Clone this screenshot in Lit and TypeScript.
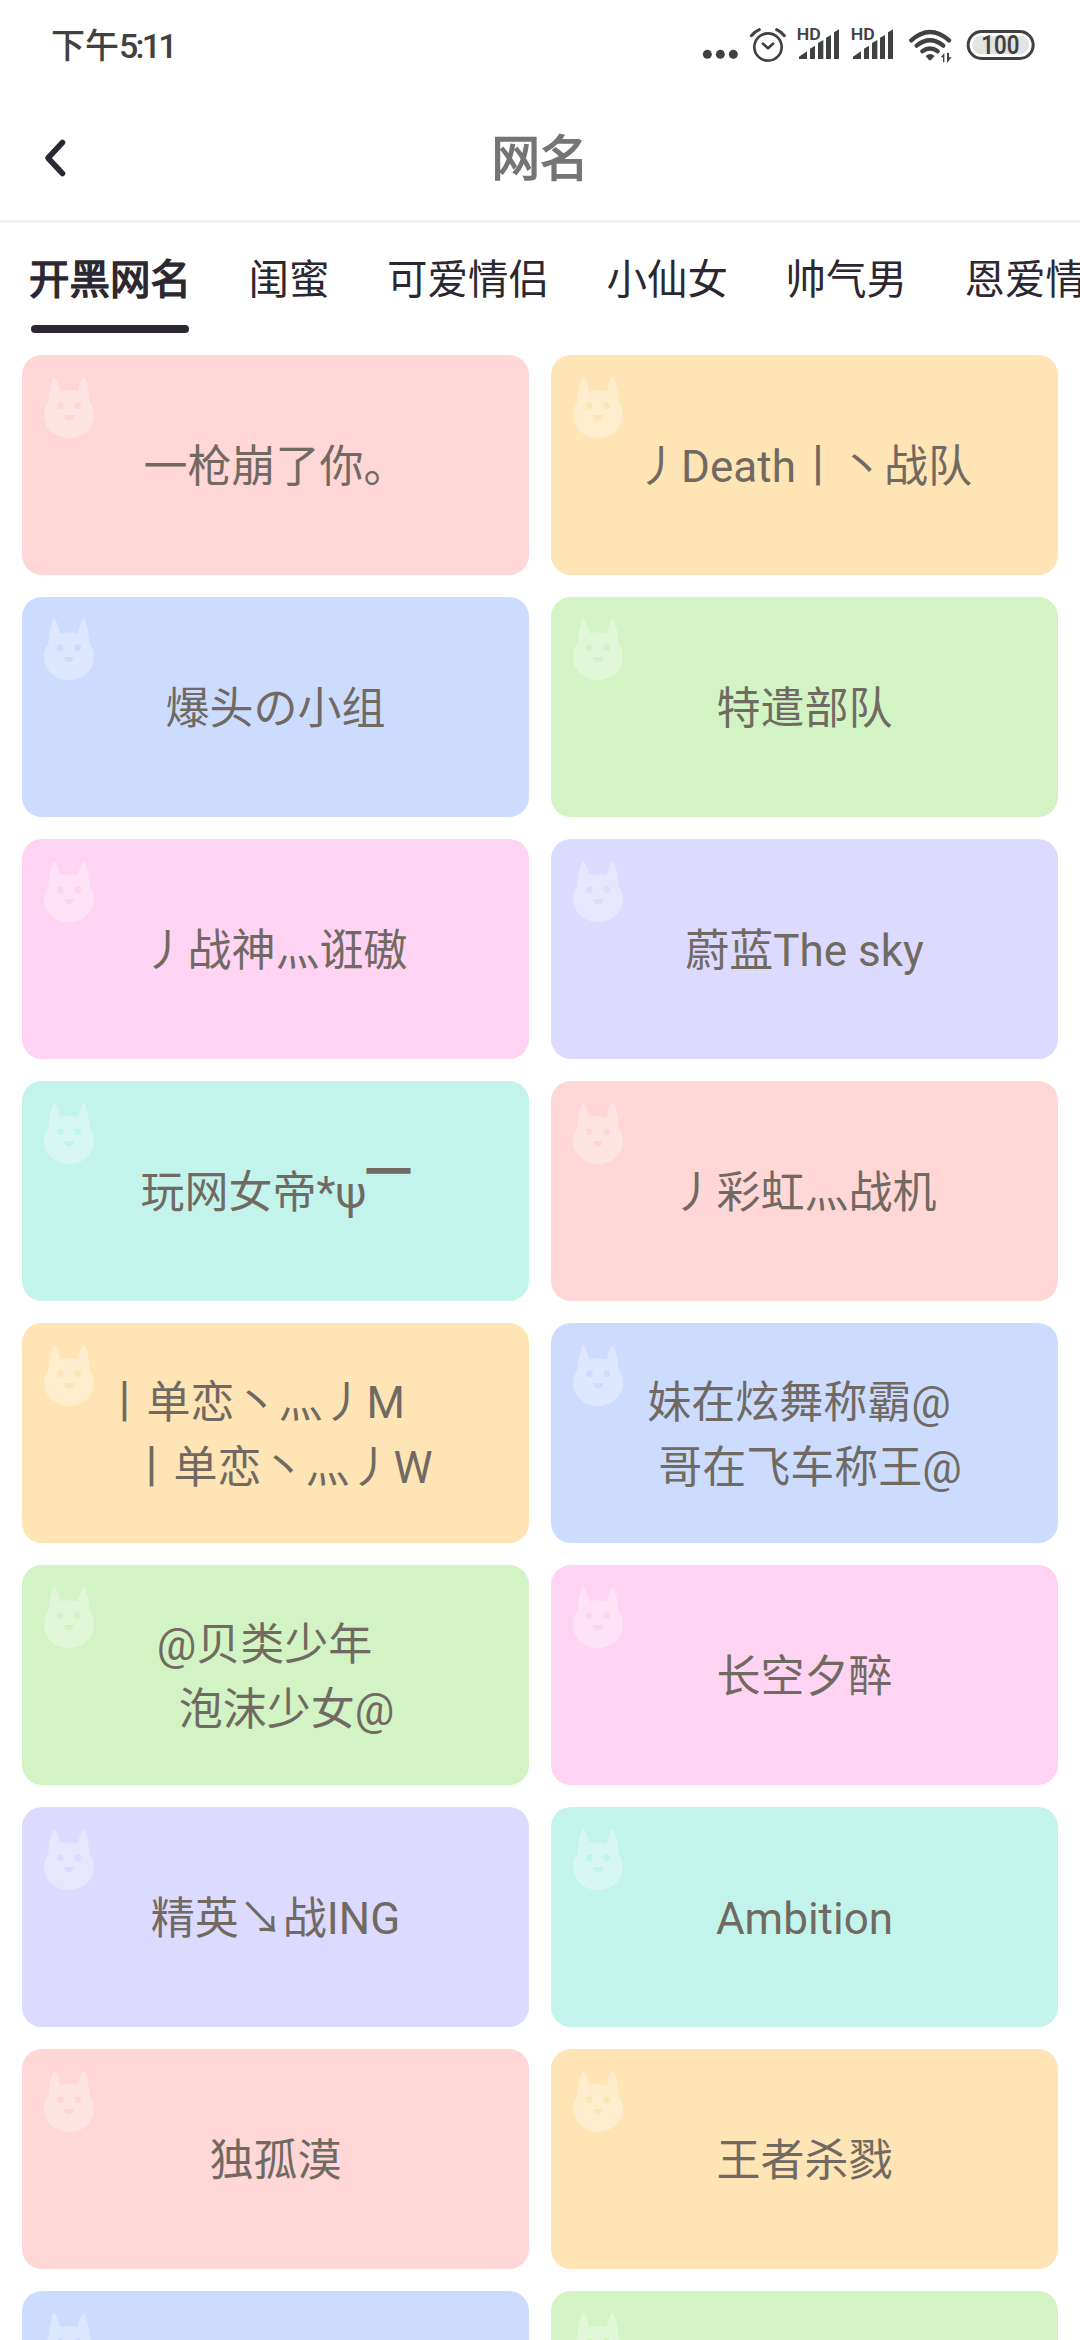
import { LitElement, html, css } from "lit";
import { customElement, property, state } from "lit/decorators.js";
import { classMap } from "lit/directives/class-map.js";

type Tone = "rose" | "amber" | "blue" | "green" | "pink" | "violet" | "mint";

interface NameEntry {
  lines: string[];
  tone: Tone;
}

const TABS = ["开黑网名", "闺蜜", "可爱情侣", "小仙女", "帅气男", "恩爱情侣"];

const NAMES: NameEntry[] = [
  { lines: ["一枪崩了你。"], tone: "rose" },
  { lines: ["丿Death丨丶战队"], tone: "amber" },
  { lines: ["爆头の小组"], tone: "blue" },
  { lines: ["特遣部队"], tone: "green" },
  { lines: ["丿战神灬诳磝"], tone: "pink" },
  { lines: ["蔚蓝The sky"], tone: "violet" },
  { lines: ["玩网女帝*ψ￣"], tone: "mint" },
  { lines: ["丿彩虹灬战机"], tone: "rose" },
  { lines: ["丨单恋丶灬丿M    ", " 丨单恋丶灬丿W"], tone: "amber" },
  { lines: ["妹在炫舞称霸@ ", " 哥在飞车称王@"], tone: "blue" },
  { lines: ["@贝类少年  ", "  泡沫少女@"], tone: "green" },
  { lines: ["长空夕醉"], tone: "pink" },
  { lines: ["精英↘战ING"], tone: "violet" },
  { lines: ["Ambition"], tone: "mint" },
  { lines: ["独孤漠"], tone: "rose" },
  { lines: ["王者杀戮"], tone: "amber" },
  { lines: [], tone: "blue" },
  { lines: [], tone: "green" },
];

@customElement("status-bar")
export class StatusBar extends LitElement {
  static styles = css`
    :host {
      display: flex;
      justify-content: space-between;
      align-items: flex-start;
      height: 96px;
      box-sizing: border-box;
      padding: 25px 43.700px 0 51px;
      color: #414141;
      font-family: Roboto, "Noto Sans CJK SC", sans-serif;
    }
    .time {
      display: flex;
      padding-top: 1px;
      font-size: 34px;
      line-height: 40px;
      font-weight: 500;
    }
    .digits {
      letter-spacing: -2.8px;
    }
    .icons {
      display: flex;
    }
    svg {
      display: block;
      height: 40px;
      fill: #414141;
    }
    .dots { width: 43px; margin-right: 2px; }
    .alarm { width: 43px; margin-right: 3px; }
    .signal { width: 54px; }
    .wifi { width: 52px; margin: 0 6.300px 0 4px; }
    .battery { width: 73px; }
    .line {
      fill: none;
      stroke: #414141;
      stroke-linecap: round;
      stroke-linejoin: round;
    }
    .level { fill: #e3e3e3; }
    .hd {
      font-size: 49px;
      font-weight: 600;
    }
    .percent {
      font-size: 75px;
      font-weight: 600;
    }
  `;

  private signal() {
    return html`<svg class="signal" viewBox="339 45 162 120">
      <text class="hd" x="350" y="91" textLength="72" lengthAdjust="spacingAndGlyphs">HD</text>
      <path d="M357 147v-7l24-16v23zM390 147v-31l15-9v40zM414 147v-48l16-9v57zM438 147v-64l15-8v72zM462 147v-80l15-9v89z" />
    </svg>`;
  }

  render() {
    return html`
      <div class="time"><span>下午</span><span class="digits">5:11</span></div>
      <div class="icons">
        <svg class="dots" viewBox="66 45 129 120">
          <circle cx="82" cy="133" r="13.5" />
          <circle cx="121" cy="133" r="13.5" />
          <circle cx="160" cy="133" r="13.5" />
        </svg>
        <svg class="alarm" viewBox="201 45 129 120">
          <circle class="line" cx="264" cy="111" r="41" stroke-width="8" />
          <path class="line" d="M249 101l15 14 15-14" stroke-width="8" />
          <path class="line" d="M214 77Q224 65 238 59M313 77Q303 65 290 59" stroke-width="9" stroke-linecap="butt" />
        </svg>
        ${this.signal()} ${this.signal()}
        <svg class="wifi" viewBox="675 45 156 120">
          <path class="line" d="M694 91Q750 41 807 91" stroke-width="13" />
          <path class="line" d="M710 107Q750 75 790 107" stroke-width="13" />
          <path class="line" d="M727 124Q750 107 773 124" stroke-width="13" />
          <path d="M737 138Q750 126 764 138L754 149Q750 152 746 149z" />
          <path d="M789 157v-15h-7l11-13v28zM801 129v29l14-16h-8v-13z" />
        </svg>
        <svg class="battery" viewBox="850 45 219 120">
          <rect class="line" x="865.500" y="64.500" width="195" height="81" rx="40.500" stroke-width="9" />
          <rect class="level" x="878" y="77" width="170" height="56" rx="28" />
          <text class="percent" x="905" y="132" textLength="114" lengthAdjust="spacingAndGlyphs">100</text>
        </svg>
      </div>
    `;
  }
}

@customElement("name-card")
export class NameCard extends LitElement {
  @property({ attribute: false }) lines: string[] = [];
  @property() tone: Tone = "rose";

  static styles = css`
    :host {
      display: block;
    }
    .card {
      position: relative;
      display: flex;
      flex-direction: column;
      align-items: center;
      justify-content: center;
      height: 220px;
      box-sizing: border-box;
      padding-top: 4px;
      border-radius: 20px;
      color: #716a62;
      font: 400 44px/65px Roboto, "Noto Sans CJK SC", sans-serif;
    }
    .multi {
      padding-top: 6px;
    }
    .text {
      white-space: pre;
    }
    .overline {
      display: inline-block;
      width: 44px;
      height: 65px;
      vertical-align: top;
      text-align: center;
      font-size: 40px;
      line-height: 62px;
      -webkit-text-stroke: 4px #716a62;
    }
    .rose { background: #ffd7d7; }
    .amber { background: #ffe4b5; }
    .blue { background: #ccdcff; }
    .green { background: #d2f4c4; }
    .pink { background: #ffd4f2; }
    .violet { background: #dcdaff; }
    .mint { background: #c3f4ec; }
    .cat {
      position: absolute;
      left: 22px;
      top: 21px;
      width: 50px;
      height: 62px;
      fill: #fff;
      fill-opacity: 0.33;
      fill-rule: evenodd;
    }
  `;

  // The fullwidth macron is drawn heavier than the surrounding glyphs.
  private line(text: string) {
    const parts = text.split("￣");
    return html`<div class="text">${parts[0]}${parts.length > 1
      ? html`<span class="overline">￣</span>${parts[1]}`
      : ""}</div>`;
  }

  render() {
    return html`
      <div class=${classMap({ card: true, multi: this.lines.length > 1, [this.tone]: true })}>
        <svg class="cat" viewBox="72 78 150 186">
          <path
            d="M85 156C86 130 92 103 99 85Q103 76 108 86Q116 104 121 124Q147 117 173 124Q178 104 186 86Q191 76 195 85C202 103 208 130 209 156Q222 173 222 194C222 233 189 264 147 264C105 264 72 233 72 194Q72 173 85 156zM111 167a10 10 0 1 0 20 0a10 10 0 1 0-20 0zM163 167a10 10 0 1 0 20 0a10 10 0 1 0-20 0zM132 195C132 216 162 216 162 195z"
          />
        </svg>
        ${this.lines.map((line) => this.line(line))}
      </div>
    `;
  }
}

@customElement("app-root")
export class AppRoot extends LitElement {
  @state() private active = 0;

  static styles = css`
    :host {
      display: block;
      height: 2340px;
      overflow: hidden;
      background: #fff;
      font-family: Roboto, "Noto Sans CJK SC", sans-serif;
    }
    .header {
      display: grid;
      grid-template-columns: 108px 1fr 108px;
      align-items: center;
      height: 124px;
      border-bottom: 3px solid #f0f0f0;
    }
    .back {
      justify-self: start;
      margin-left: 40px;
      width: 30px;
      height: 40px;
      fill: none;
      stroke: #2c2730;
      stroke-width: 5.600;
      stroke-linecap: round;
      stroke-linejoin: round;
    }
    .title {
      margin: 0;
      padding-top: 3px;
      text-align: center;
      font-size: 48.500px;
      line-height: 72px;
      font-weight: 400;
      color: #757575;
      -webkit-text-stroke: 1.500px #757575;
    }
    .tabs {
      display: flex;
      gap: 57.500px;
      height: 110px;
      padding-left: 29px;
      overflow: hidden;
    }
    .tab {
      flex: none;
      display: flex;
      flex-direction: column;
      padding-top: 27px;
      font-size: 40.500px;
      line-height: 60px;
      color: #2c2730;
      white-space: nowrap;
    }
    .selected {
      -webkit-text-stroke: 1.400px #2c2730;
    }
    .selected::after {
      content: "";
      height: 8px;
      margin: 15px 2px 0;
      border-radius: 4px;
      background: #2c2730;
    }
    .grid {
      display: grid;
      grid-template-columns: 1fr 1fr;
      gap: 22px;
      padding: 22px;
    }
  `;

  render() {
    return html`
      <status-bar></status-bar>
      <header class="header">
        <svg class="back" viewBox="40 138 30 40"><path d="M62.500 142.500L48 158l14.500 15.500" /></svg>
        <h1 class="title">网名</h1>
      </header>
      <nav class="tabs">
        ${TABS.map(
          (tab, i) => html`<div
            class=${classMap({ tab: true, selected: i === this.active })}
            @click=${() => (this.active = i)}
          >${tab}</div>`
        )}
      </nav>
      <main class="grid">
        ${NAMES.map((n) => html`<name-card .lines=${n.lines} .tone=${n.tone}></name-card>`)}
      </main>
    `;
  }
}
